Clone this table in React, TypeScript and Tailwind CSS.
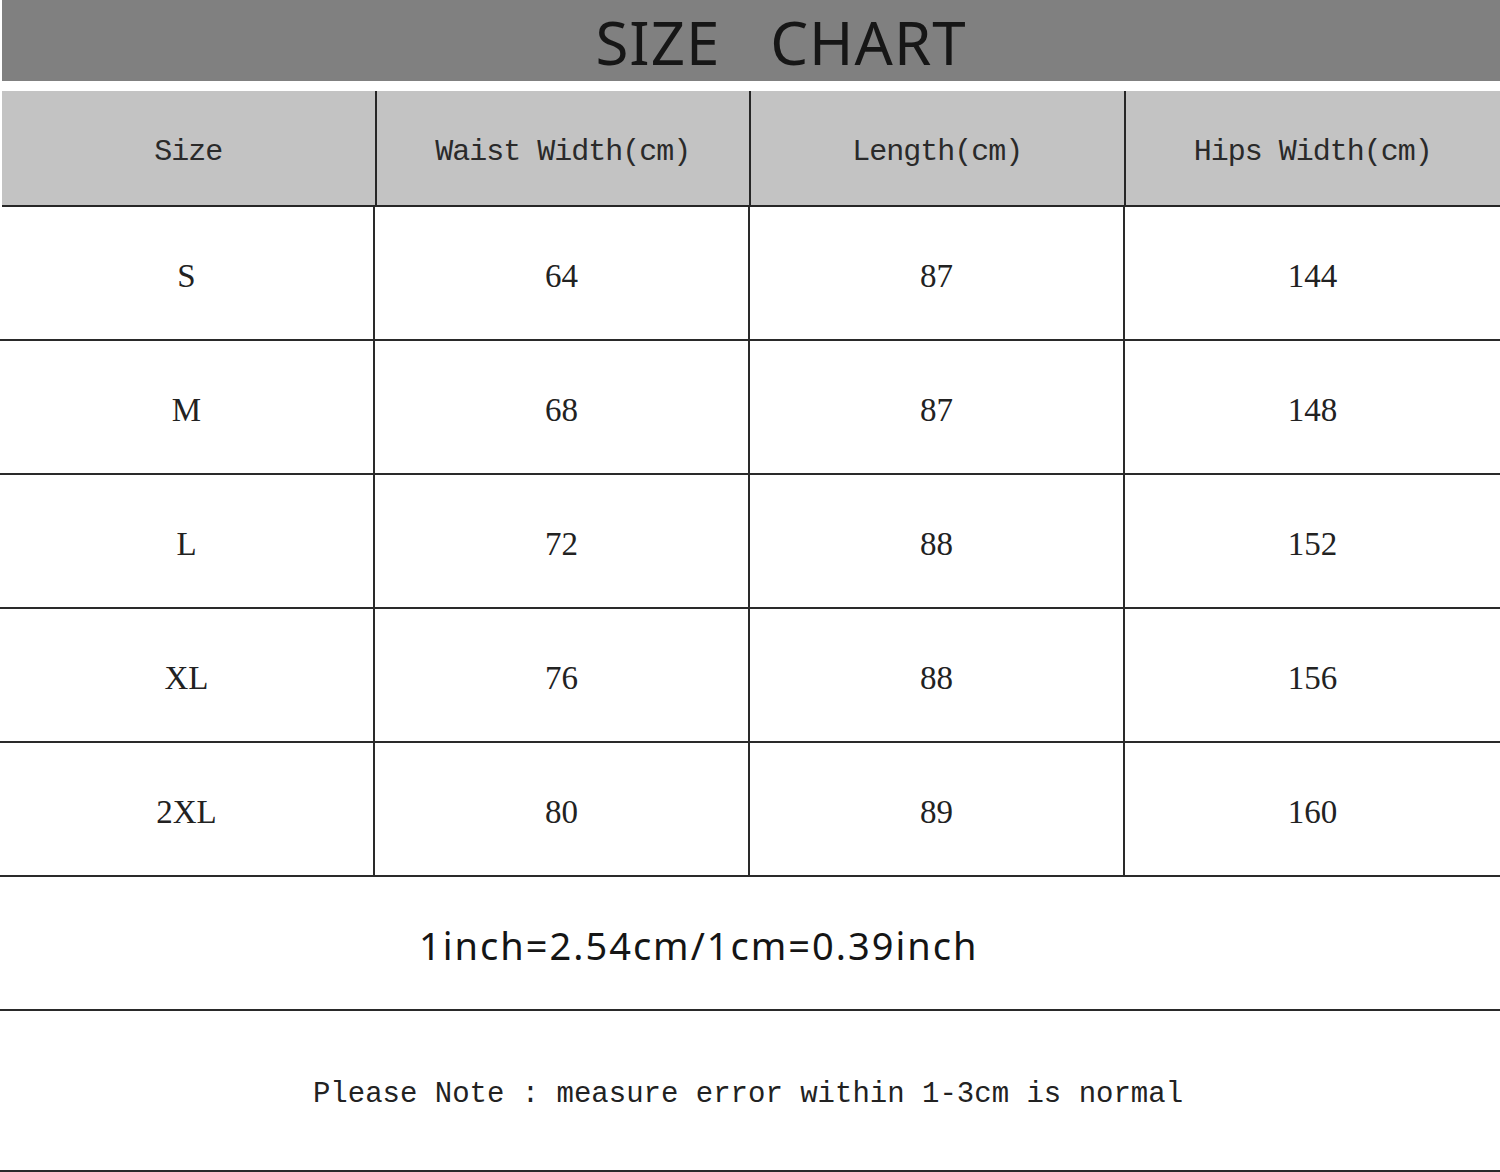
import React from 'react';

const rows = [
  ['S', '64', '87', '144'],
  ['M', '68', '87', '148'],
  ['L', '72', '88', '152'],
  ['XL', '76', '88', '156'],
  ['2XL', '80', '89', '160'],
];

const headers = ['Size', 'Waist Width(cm)', 'Length(cm)', 'Hips Width(cm)'];

const monoFont = { fontFamily: '"Liberation Mono", "DejaVu Sans Mono", monospace' };

const App: React.FC = () => {
  return (
    <div className="w-[1500px] h-[1172px] bg-white overflow-hidden">
      {/* title bar */}
      <div className="h-[81px] ml-[2px] bg-[#808080] flex items-center justify-center pt-[3px]">
        <h1
          className="text-[60px] leading-none text-[#161616] whitespace-pre pl-[60px] tracking-[1px]"
          style={{ fontFamily: '"Noto Sans", "Open Sans", sans-serif' }}
        >
          SIZE   CHART
        </h1>
      </div>

      <div className="h-[10px]" />

      {/* header row */}
      <div className="grid grid-cols-4 h-[116px] border-b-2 border-[#262626] bg-[#c3c3c3] ml-[2px]">
        {headers.map((h, i) => (
          <div
            key={h}
            className={`flex items-center justify-center pt-[8px] text-[30px] tracking-[-1px] text-[#2a2a2a] ${
              i < 3 ? 'border-r-2 border-[#262626]' : ''
            }`}
            style={monoFont}
          >
            {h}
          </div>
        ))}
      </div>

      {/* data rows */}
      {rows.map((r) => (
        <div key={r[0]} className="grid grid-cols-4 h-[134px] border-b-2 border-[#2a2a2a]">
          {r.map((cell, i) => (
            <div
              key={i}
              className={`flex items-center justify-center pt-[8px] text-[33px] text-[#222] ${
                i < 3 ? 'border-r-2 border-[#2a2a2a]' : ''
              }`}
              style={{ fontFamily: '"Liberation Serif", "DejaVu Serif", serif' }}
            >
              {cell}
            </div>
          ))}
        </div>
      ))}

      {/* conversion row */}
      <div className="h-[134px] border-b-2 border-[#2a2a2a] flex items-center pl-[419px] pt-[4px]">
        <span
          className="text-[38px] tracking-[2px] text-[#151515]"
          style={{ fontFamily: '"Noto Sans", "Open Sans", sans-serif' }}
        >
          1inch=2.54cm/1cm=0.39inch
        </span>
      </div>

      {/* note row */}
      <div className="h-[161px] border-b-2 border-[#2a2a2a] flex items-center justify-center pt-[8px]">
        <span className="text-[29px] tracking-[0px] text-[#222] whitespace-pre pr-[4px]" style={monoFont}>
          Please Note : measure error within 1-3cm is normal
        </span>
      </div>
    </div>
  );
};

export default App;
